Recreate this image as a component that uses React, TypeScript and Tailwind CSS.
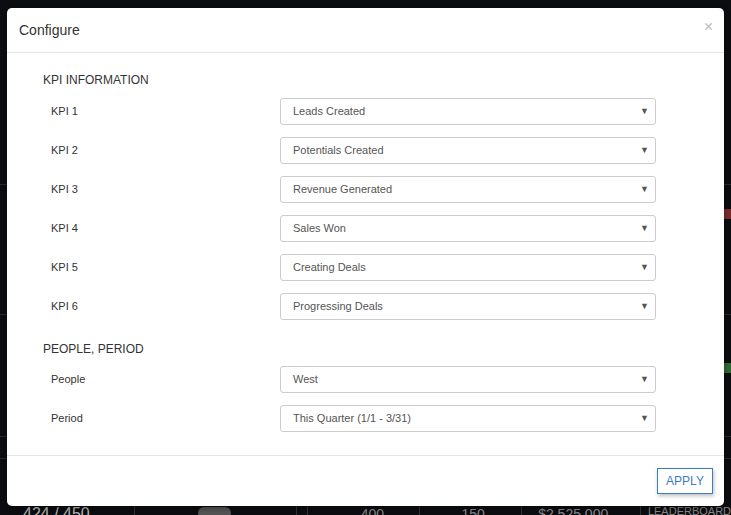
import { X } from "lucide-react";

const KPIS = [
  { label: "KPI 1", value: "Leads Created" },
  { label: "KPI 2", value: "Potentials Created" },
  { label: "KPI 3", value: "Revenue Generated" },
  { label: "KPI 4", value: "Sales Won" },
  { label: "KPI 5", value: "Creating Deals" },
  { label: "KPI 6", value: "Progressing Deals" },
];

const PEOPLE = [
  { label: "People", value: "West" },
  { label: "Period", value: "This Quarter (1/1 - 3/31)" },
];

function SelectRow({ label, value }: { label: string; value: string }) {
  return (
    <div className="flex items-center pl-2">
      <span className="w-[229px] text-[11px] text-[#333]">{label}</span>
      <div className="flex h-[27px] flex-1 items-center justify-between rounded-[3px] border border-[#ccc] bg-white pl-3 pr-[6px]">
        <span className="text-[11px] text-[#555]">{value}</span>
        <span className="text-[9px] leading-none text-[#555]">▼</span>
      </div>
    </div>
  );
}

export default function App() {
  return (
    <div
      className="relative h-[515px] w-[731px] overflow-hidden bg-[#0c0d10]"
      style={{ fontFamily: "'Liberation Sans', Arial, sans-serif" }}
    >
      {/* Dashboard behind the overlay */}
      <div className="flex h-full flex-col">
        <div className="h-[185px] border-b border-[#2a2b2e]" />
        <div className="flex h-[130px] justify-end border-b border-[#2a2b2e]">
          <div className="mt-[24px] h-[10px] w-[7px] bg-[#7a2a2a]" />
        </div>
        <div className="flex h-[122px] justify-end border-b border-[#2a2b2e]">
          <div className="mt-[48px] h-[10px] w-[7px] bg-[#2f6a35]" />
        </div>
        <div className="h-[22px] border-b border-[#2a2b2e]" />
        <div className="flex-1" />
        <div className="flex h-[11px] items-start text-[#8a8a8a]">
          <span className="ml-[23px] w-[113px] text-[16px] leading-[20px] text-[#bbb]">424 / 450</span>
          <span className="h-full w-px bg-[#333]" />
          <span className="ml-[63px] mt-[3px] h-[12px] w-[34px] rounded-full bg-[#555]" />
          <span className="ml-[65px] h-full w-px bg-[#333]" />
          <span className="ml-[10px] h-full w-px bg-[#333]" />
          <span className="ml-[53px] w-[59px] text-[14px] leading-[20px]">400</span>
          <span className="h-full w-px bg-[#333]" />
          <span className="ml-[42px] w-[61px] text-[14px] leading-[20px]">150</span>
          <span className="h-full w-px bg-[#333]" />
          <span className="ml-[16px] w-[104px] text-[14px] leading-[20px]">$2,525,000</span>
          <span className="h-full w-px bg-[#333]" />
          <span className="ml-[7px] text-[11px] leading-[14px]">LEADERBOARD</span>
        </div>
      </div>

      {/* Modal */}
      <div className="absolute left-[7px] top-[8px] flex h-[498px] w-[717px] flex-col rounded-[5px] bg-white shadow-[0_2px_6px_rgba(0,0,0,0.4)]">
        <div className="flex h-[45px] items-center justify-between border-b border-[#e5e5e5] pl-3 pr-[10px]">
          <h2 className="text-[14px] text-[#333]">Configure</h2>
          <X size={11} strokeWidth={3.5} className="mb-[8px] text-[#c4c4c4]" />
        </div>

        <div className="flex-1 pl-[36px] pr-[68px] pt-[19px]">
          <h3 className="mb-[9px] text-[12px] leading-[17px] text-[#333]">KPI INFORMATION</h3>
          <div className="flex flex-col gap-[12px]">
            {KPIS.map((k) => (
              <SelectRow key={k.label} label={k.label} value={k.value} />
            ))}
          </div>

          <h3 className="mb-[8px] mt-[21px] text-[12px] leading-[17px] text-[#333]">PEOPLE, PERIOD</h3>
          <div className="flex flex-col gap-[12px]">
            {PEOPLE.map((p) => (
              <SelectRow key={p.label} label={p.label} value={p.value} />
            ))}
          </div>
        </div>

        <div className="flex h-[51px] items-start justify-end border-t border-[#e5e5e5] pr-[11px] pt-[12px]">
          <button className="h-[26px] w-[56px] border-[1.5px] border-[#3a7dc0] bg-white text-[12px] text-[#3a7dc0] shadow-[1px_2px_4px_rgba(0,0,0,0.25)]">
            APPLY
          </button>
        </div>
      </div>
    </div>
  );
}
